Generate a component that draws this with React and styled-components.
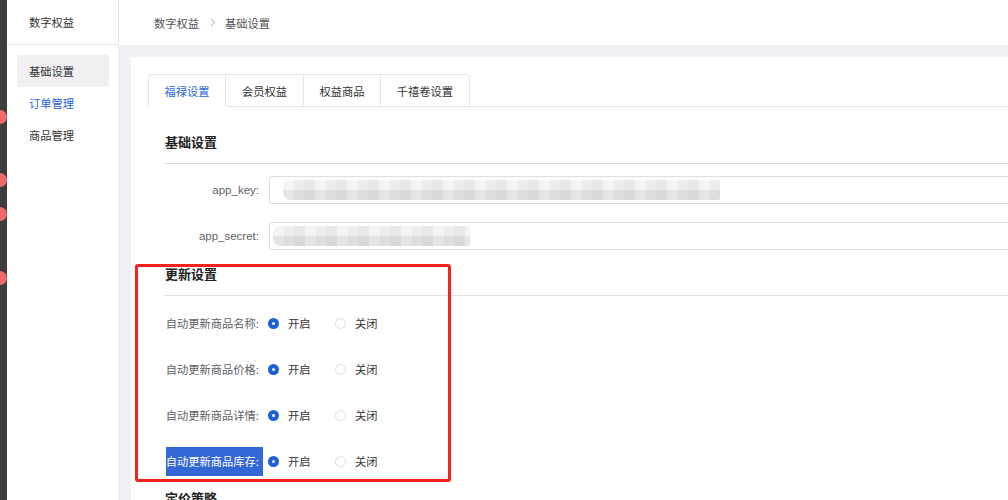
import React from "react";
import styled, { createGlobalStyle } from "styled-components";

const GlobalStyle = createGlobalStyle`
  html, body { margin: 0; padding: 0; }
  body {
    font-family: "Noto Sans CJK SC", "Noto Sans", "Liberation Sans", sans-serif;
    font-size: 11.25px;
    color: #333;
    background: #fff;
  }
`;

const Page = styled.div`
  position: relative;
  display: flex;
  width: 1008px;
  height: 500px;
  overflow: hidden;
`;

const Strip = styled.div`
  position: relative;
  width: 7px;
  flex: none;
  background: #3d3d3d;
`;

const Dot = styled.span`
  position: absolute;
  left: -7px;
  width: 14px;
  height: 14px;
  border-radius: 50%;
  background: #f06a6a;
`;

const Sidebar = styled.aside`
  width: 111px;
  flex: none;
  border-right: 1px solid #e9e9ec;
  display: flex;
  flex-direction: column;
`;

const SideHeader = styled.div`
  height: 44px;
  border-bottom: 1px solid #e9e9ec;
  display: flex;
  align-items: center;
  padding-left: 22px;
  color: #333;
`;

const Menu = styled.nav`
  display: flex;
  flex-direction: column;
  padding: 10px 9px 0 10px;
`;

const MenuItem = styled.div`
  height: 32px;
  display: flex;
  align-items: center;
  padding-left: 12px;
  border-radius: 2px;
  background: ${(p) => (p.$active ? "#f0f0f3" : "transparent")};
  color: ${(p) => (p.$link ? "#1f5fd6" : "#333")};
`;

const Main = styled.main`
  flex: 1;
  min-width: 0;
  display: flex;
  flex-direction: column;
  background: #f0f1f5;
  overflow: hidden;
`;

const TopBar = styled.header`
  height: 45px;
  flex: none;
  background: #fff;
  display: flex;
  align-items: center;
  padding-left: 35px;
  color: #555;
`;

const Sep = styled.svg`
  width: 6px;
  height: 9px;
  margin: 0 9px 0 11px;
`;

const Content = styled.div`
  flex: 1;
  padding: 12px 0 0 12px;
  display: flex;
`;

const Card = styled.section`
  flex: 1;
  background: #fff;
  padding: 17px 0 0 17px;
  overflow: hidden;
`;

const TabBar = styled.div`
  display: flex;
  border-bottom: 1px solid #e4e6ec;
  height: 32px;
`;

const Tab = styled.div`
  width: ${(p) => p.$w}px;
  box-sizing: border-box;
  height: 33px;
  display: flex;
  align-items: center;
  justify-content: center;
  border: 1px solid #e4e6ec;
  border-left: ${(p) => (p.$first ? "1px solid #e4e6ec" : "none")};
  border-bottom: ${(p) => (p.$active ? "1px solid #fff" : "1px solid #e4e6ec")};
  border-radius: ${(p) => (p.$first ? "3px 0 0 0" : p.$last ? "0 3px 0 0" : "0")};
  background: #fff;
  color: ${(p) => (p.$active ? "#2b66d9" : "#333")};
`;

const Section = styled.div`
  padding-left: 17px;
  display: flex;
  flex-direction: column;
`;

const SectionTitle = styled.h3`
  margin: ${(p) => p.$mt}px 0 0 0;
  padding-bottom: 11px;
  line-height: 20px;
  font-size: 13px;
  font-weight: 700;
  color: #222;
  border-bottom: 1px solid #dfe1e6;
`;

const FieldRow = styled.div`
  display: flex;
  align-items: center;
  margin-top: ${(p) => p.$mt}px;
  height: 28px;
`;

const FieldLabel = styled.label`
  width: 94px;
  flex: none;
  text-align: right;
  margin-right: 10px;
  color: #606266;
  font-family: "Liberation Sans", "Noto Sans CJK SC", sans-serif;
  font-size: 11.5px;
`;

const Input = styled.div`
  width: 780px;
  flex: none;
  height: 28px;
  box-sizing: border-box;
  border: 1px solid #dcdfe6;
  border-radius: 2px;
  display: flex;
  align-items: center;
  padding-left: ${(p) => p.$pad}px;
`;

const Blur = styled.div`
  width: ${(p) => p.$w}px;
  height: 20px;
  filter: blur(0.6px);
  background:
    repeating-linear-gradient(90deg, rgba(0,0,0,0.00) 0 11px, rgba(0,0,0,0.03) 11px 21px, rgba(0,0,0,0.05) 21px 32px),
    linear-gradient(180deg, #f4f4f4 0 50%, #e5e5e5 50% 100%);
  border-radius: 8px 2px 2px 8px;
`;

const RadioRow = styled.div`
  display: flex;
  align-items: center;
  height: 28px;
  margin-top: ${(p) => p.$mt}px;
`;

const RadioLabelBox = styled.div`
  width: 98px;
  flex: none;
  text-align: right;
  color: #606266;
  line-height: 28px;
`;

const RadioLabelText = styled.span`
  display: inline-block;
  padding: 0 4px 0 0;
  background: ${(p) => (p.$sel ? "#3367d6" : "transparent")};
  color: ${(p) => (p.$sel ? "#fff" : "#606266")};
  line-height: 29px;
`;

const RadioGroup = styled.div`
  display: flex;
  align-items: center;
  margin-left: 5px;
`;

const RadioOpt = styled.div`
  display: flex;
  align-items: center;
  width: ${(p) => p.$w}px;
  color: #333;
`;

const Circle = styled.span`
  width: 11px;
  height: 11px;
  box-sizing: border-box;
  border-radius: 50%;
  margin-right: 9px;
  border: ${(p) => (p.$on ? "none" : "1px solid #dcdfe6")};
  background: ${(p) => (p.$on ? "#1d5fd5" : "#fff")};
  display: flex;
  align-items: center;
  justify-content: center;
  &::after {
    content: "";
    width: 3px;
    height: 3px;
    border-radius: 50%;
    background: #fff;
    display: ${(p) => (p.$on ? "block" : "none")};
  }
`;

const Highlight = styled.div`
  position: absolute;
  left: 135px;
  top: 264px;
  width: 316px;
  height: 218px;
  box-sizing: border-box;
  border: 3px solid #f5221b;
  border-radius: 3px;
  pointer-events: none;
`;

const tabs = [
  { t: "福禄设置", w: 78 },
  { t: "会员权益", w: 78 },
  { t: "权益商品", w: 77 },
  { t: "千禧卷设置", w: 89 },
];

const radios = ["自动更新商品名称:", "自动更新商品价格:", "自动更新商品详情:", "自动更新商品库存:"];

export default function App() {
  return (
    <>
      <GlobalStyle />
      <Page>
        <Strip>
          <Dot style={{ top: 110 }} />
          <Dot style={{ top: 173 }} />
          <Dot style={{ top: 207 }} />
          <Dot style={{ top: 271 }} />
        </Strip>
        <Sidebar>
          <SideHeader>数字权益</SideHeader>
          <Menu>
            <MenuItem $active>基础设置</MenuItem>
            <MenuItem $link>订单管理</MenuItem>
            <MenuItem>商品管理</MenuItem>
          </Menu>
        </Sidebar>
        <Main>
          <TopBar>
            数字权益
            <Sep viewBox="0 0 6 9">
              <path d="M1 0.8 L4.6 4.5 L1 8.2" fill="none" stroke="#c0c4cc" strokeWidth="1.1" />
            </Sep>
            基础设置
          </TopBar>
          <Content>
            <Card>
              <TabBar>
                {tabs.map((tb, i) => (
                  <Tab key={tb.t} $w={tb.w} $first={i === 0} $last={i === tabs.length - 1} $active={i === 0}>
                    {tb.t}
                  </Tab>
                ))}
              </TabBar>
              <Section>
                <SectionTitle $mt={25}>基础设置</SectionTitle>
                <FieldRow $mt={12}>
                  <FieldLabel>app_key:</FieldLabel>
                  <Input $pad={13}>
                    <Blur $w={437} />
                  </Input>
                </FieldRow>
                <FieldRow $mt={18}>
                  <FieldLabel>app_secret:</FieldLabel>
                  <Input $pad={3}>
                    <Blur $w={197} />
                  </Input>
                </FieldRow>
                <SectionTitle $mt={14}>更新设置</SectionTitle>
                {radios.map((r, i) => (
                  <RadioRow key={r} $mt={i === 0 ? 13 : 18}>
                    <RadioLabelBox>
                      <RadioLabelText $sel={i === 3}>{r}</RadioLabelText>
                    </RadioLabelBox>
                    <RadioGroup>
                      <RadioOpt $w={67}>
                        <Circle $on />
                        开启
                      </RadioOpt>
                      <RadioOpt $w={60}>
                        <Circle />
                        关闭
                      </RadioOpt>
                    </RadioGroup>
                  </RadioRow>
                ))}
                <SectionTitle $mt={13}>定价策略</SectionTitle>
              </Section>
            </Card>
          </Content>
        </Main>
        <Highlight />
      </Page>
    </>
  );
}
